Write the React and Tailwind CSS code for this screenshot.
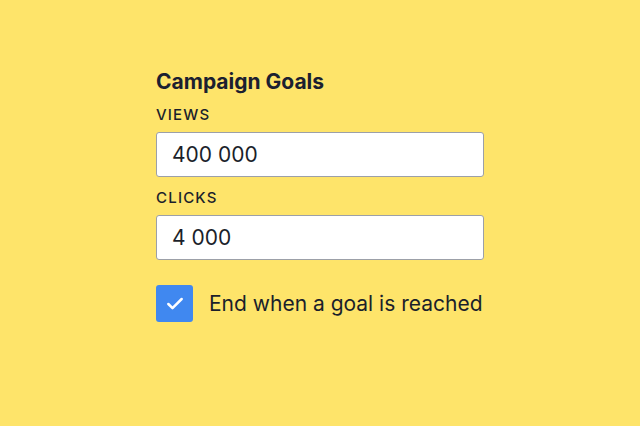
import { Check } from "lucide-react";

function Field({ label, value }) {
  return (
    <div className="flex flex-col">
      <label className="text-[15px] font-medium tracking-[0.08em] leading-none text-[#1b1f2b] mb-[10px]">
        {label}
      </label>
      <div className="h-[45px] w-[328px] bg-white border border-[#9ca0a8] rounded-[3px] flex items-center pl-[15px] text-[21px] text-[#1b1f2b]">
        {value}
      </div>
    </div>
  );
}

export default function App() {
  return (
    <div
      className="w-[640px] h-[426px] bg-[#fee46a] pl-[156px] pt-[71px]"
      style={{ fontFamily: "Inter, 'Noto Sans', sans-serif" }}
    >
      <h2 className="text-[21px] font-bold leading-none text-[#1b2030] mb-[15px]">Campaign Goals</h2>
      <div className="flex flex-col gap-[13px]">
        <Field label="VIEWS" value="400 000" />
        <Field label="CLICKS" value="4 000" />
      </div>
      <div className="flex items-center gap-[16px] mt-[25px]">
        <div className="w-[37px] h-[37px] rounded-[3px] bg-[#4088f0] flex items-center justify-center">
          <Check size={20} strokeWidth={3} className="text-white" />
        </div>
        <span className="text-[21px] text-[#1b1f2b]">End when a goal is reached</span>
      </div>
    </div>
  );
}
